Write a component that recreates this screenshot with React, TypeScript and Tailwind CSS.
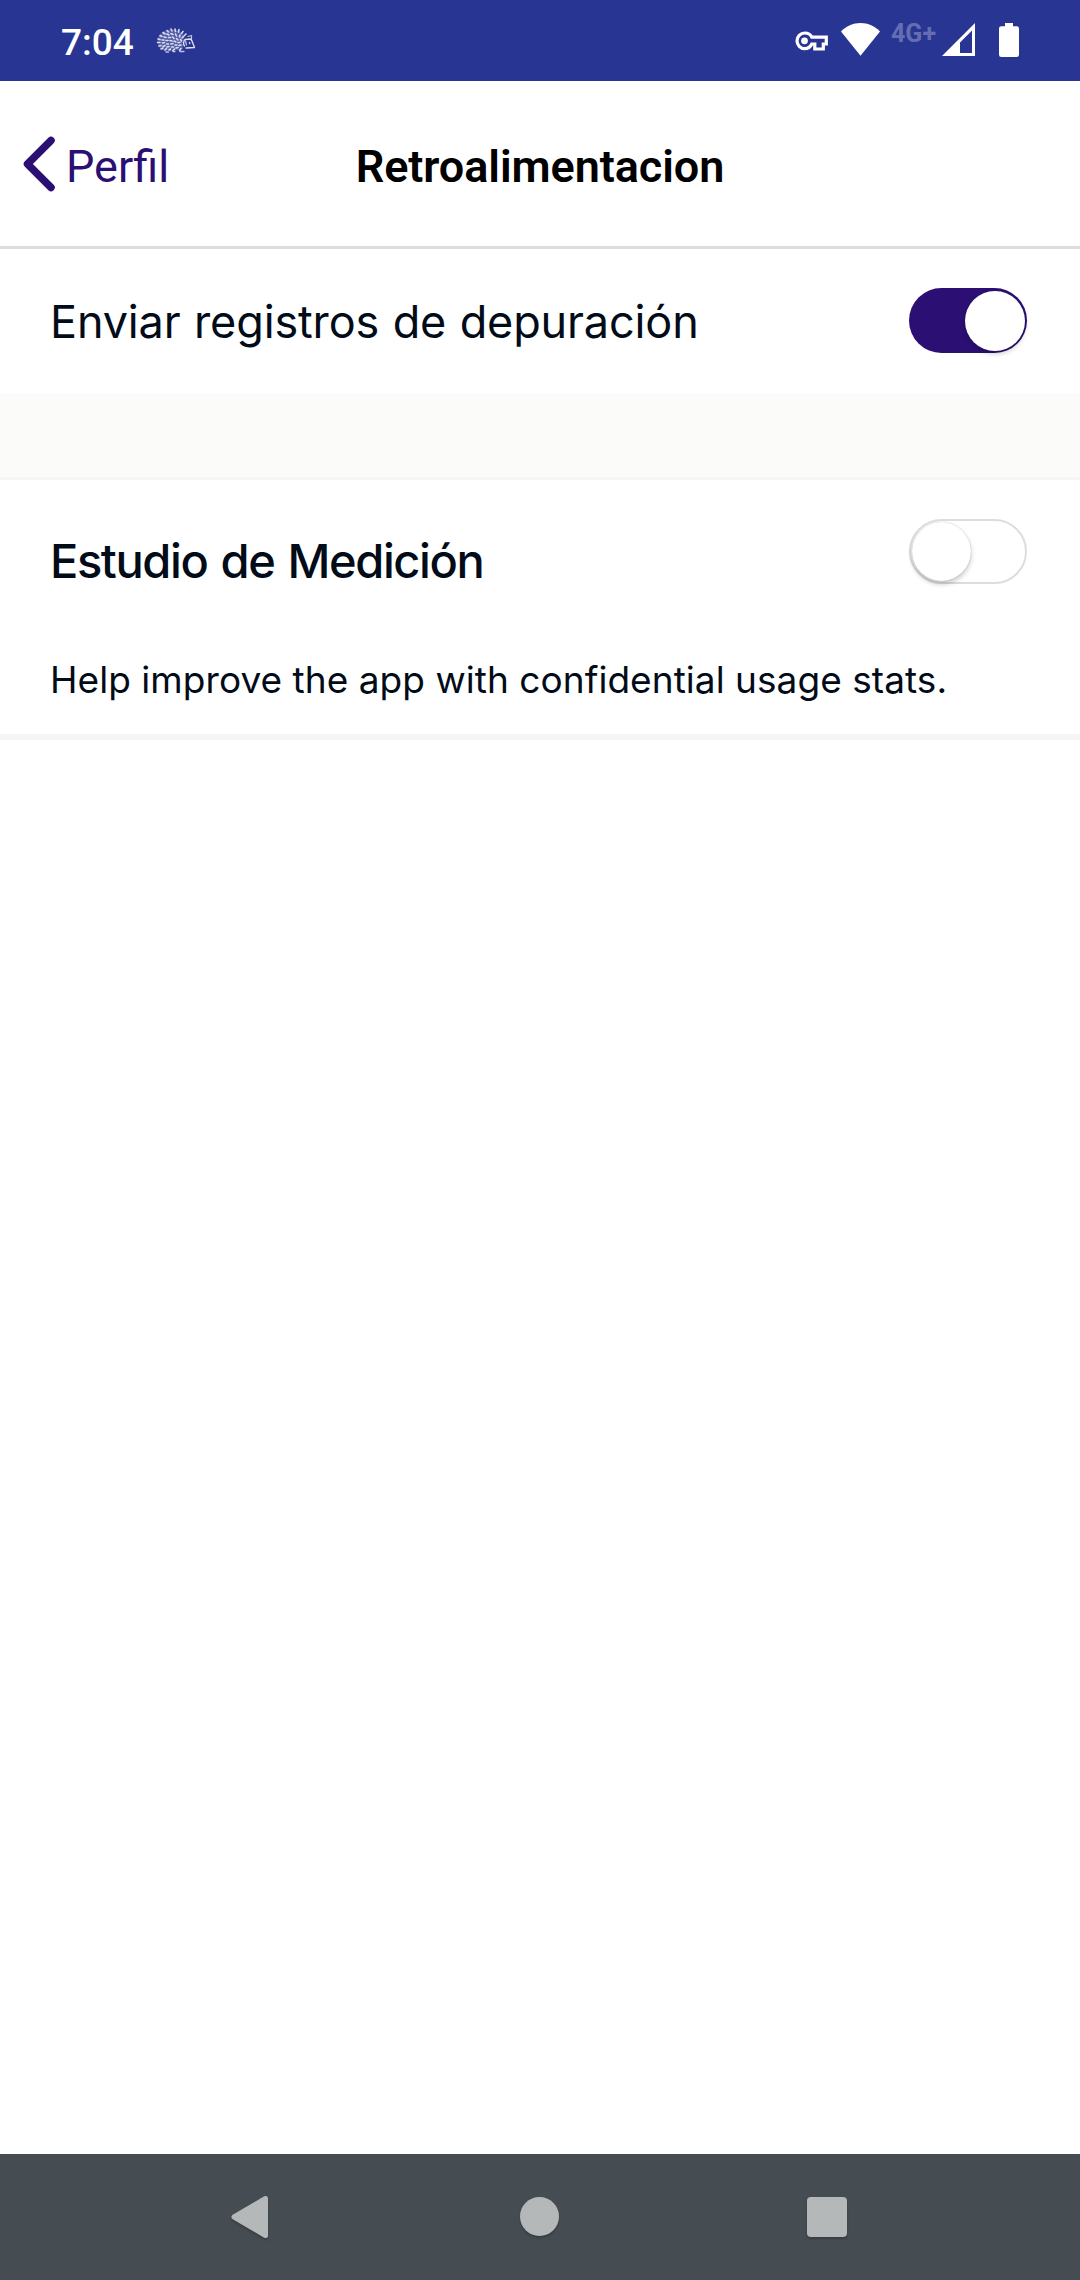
import React from "react";

const QUILLS = [
  "M11 2.500L12.500 4M15 1L16 3M19 1L19.500 3.500M23 1.500L22.500 4M27 3.500L25.500 5.500M30 6L28.500 7.500",
  "M7 4.500L9 6M11 6L13 7M15 5.500L17 6.500M19.500 6L20.500 8M24 7L23.500 9M27.500 8.500L26 10",
  "M4 7.500L6 8.500M8 9L10 9.500M12.500 9.500H14.500M16.500 9L18 10.500M20.500 10.500L22 12M24.500 11.500L25.500 13",
  "M2 11L4 11.500M6 12H8M10 12.500H12M14 12.500L16 13M18 13L20 14M22 14.500H24",
  "M1.500 14.500L4 14.500M6.500 15L8.500 14.500M10.500 16H12.500M15 16L17 15.500M19 17H21M23 17.500L25 17",
  "M3 18L5 17.500M7 18.500L9 17.500M11 19L13 18.500M15.500 19H17.500M20 20L22 19.500",
  "M5 21L7 20M9 22L10.500 20.500M13 22L14.500 21M17 22.500L18.500 21M23.500 22.500L25 20.500",
];

function Hedgehog() {
  return (
    <svg width="40" height="26" viewBox="0 0 40 26" fill="none" stroke="#ffffff" strokeLinecap="round" strokeLinejoin="round">
      <path
        d="M29 8C25 3 20 1 15 1.500C8 2 2 6 1.500 12C1 18 5 22 10 23.500C15 24 22 22 27 21L27 13Z"
        fill="#ffffff"
        fillOpacity="0.200"
        stroke="none"
      />
      {QUILLS.map((d) => (
        <path key={d} d={d} strokeWidth="1.600" opacity="0.800" />
      ))}
      <path d="M10 24L12.500 24.200M17 23.500H19M24 23.500H28" strokeWidth="1.300" opacity="0.700" />
      <path d="M28.500 18C27 16 27.500 13 29 11.500L34.500 11L36 13L38.500 19.500L30 20" strokeWidth="1.300" opacity="0.850" />
      <path d="M32 8.500L35.500 7.500L35.500 11M29.500 13L30.500 17" strokeWidth="1.200" opacity="0.700" />
      <circle cx="33.500" cy="15" r="0.600" fill="#fff" strokeWidth="0.500" />
    </svg>
  );
}

function StatusBar() {
  return (
    <div className="flex h-[81px] items-start bg-[#283593] pl-[61px] text-white">
      <span className="mt-[20px] w-[95px] text-[37px] leading-[46px] font-medium">7:04</span>
      <div className="mt-[28px]">
        <Hedgehog />
      </div>
      <svg className="mt-[31px] ml-[599px]" width="34" height="20" viewBox="0 0 34 20">
        <path
          d="M9.700 2C5.300 2 2 5.600 2 9.800S5.300 17.600 9.700 17.600C13 17.600 15.600 15.600 16.800 13H19.800V18H28.300V13H31.300V6.200H16.800C15.600 3.700 13 2 9.700 2Z"
          fill="none"
          stroke="#fff"
          strokeWidth="3.200"
        />
        <circle cx="9.500" cy="9.800" r="3.400" fill="#fff" />
      </svg>
      <svg className="mt-[23px] ml-[12px]" width="39" height="33" viewBox="0 0 39 33">
        <path d="M19.500 32.700L0 8.500C5 3.200 12 0 19.500 0S34 3.200 39 8.500Z" fill="#fff" />
      </svg>
      <span className="mt-[19px] ml-[11px] w-[51px] text-[25px] leading-[29px] font-bold text-white/30">4G+</span>
      <svg className="mt-[23px]" width="33" height="33" viewBox="0 0 33 33">
        <path d="M33 0V33H0ZM30 7.500L18 19.500V30H30Z" fill="#fff" fillRule="evenodd" />
      </svg>
      <svg className="mt-[23px] ml-[24px]" width="20" height="34" viewBox="0 0 20 34">
        <path d="M6 0H14V3.300H17.700Q20 3.300 20 5.600V31.700Q20 34 17.700 34H2.300Q0 34 0 31.700V5.600Q0 3.300 2.300 3.300H6Z" fill="#fff" />
      </svg>
    </div>
  );
}

function Header() {
  return (
    <header className="grid h-[168px] grid-cols-[1fr_auto_1fr] items-center border-b-[3px] border-[#dddddd] bg-white">
      <div className="flex items-center text-[#2b0f73]">
        <svg className="ml-[23px]" width="33" height="56" viewBox="0 0 33 56">
          <path d="M28 4.500L4.500 28L28 51.500" fill="none" stroke="currentColor" strokeWidth="7.500" strokeLinecap="round" strokeLinejoin="round" />
        </svg>
        <span className="mt-[6px] ml-[10px] text-[45px] leading-[54px]">Perfil</span>
      </div>
      <h1 className="mt-[6px] text-[45px] leading-[54px] font-semibold tracking-[-0.080px] text-black">Retroalimentacion</h1>
      <div />
    </header>
  );
}

function Toggle({ on }: { on: boolean }) {
  return (
    <div
      className={
        on
          ? "flex h-[65px] w-[118px] shrink-0 items-center justify-end rounded-full bg-[#2b0f73] pr-[2.500px]"
          : "flex h-[65px] w-[118px] shrink-0 items-center rounded-full border-2 border-[#dddddd] bg-white pl-[1px]"
      }
    >
      <div
        className={
          on
            ? "h-[60px] w-[60px] rounded-full bg-white shadow-[0_3px_5px_rgba(0,0,0,0.2)]"
            : "h-[59px] w-[59px] rounded-full bg-white shadow-[0_3px_5px_rgba(0,0,0,0.22),0_0_1px_rgba(0,0,0,0.3)]"
        }
      />
    </div>
  );
}

function NavBar() {
  return (
    <nav className="h-[126px] bg-[#454d53]">
      <svg width="1080" height="126" viewBox="0 0 1080 126" className="drop-shadow-[0_2px_1px_rgba(0,0,0,0.2)]">
        <path d="M234 63L265.500 44.500V81.500Z" fill="#b4b8b9" stroke="#b4b8b9" strokeWidth="5" strokeLinejoin="round" />
        <circle cx="539.500" cy="62.500" r="19.500" fill="#b4b8b9" />
        <rect x="807" y="43" width="40" height="40" rx="4" fill="#b4b8b9" />
      </svg>
    </nav>
  );
}

export default function App() {
  return (
    <div className="flex h-[2280px] w-[1080px] flex-col bg-white font-['Roboto',sans-serif]">
      <StatusBar />
      <Header />
      <main className="flex-1 font-['Inter',sans-serif] text-[#020b18]">
        <section className="flex h-[144px] items-start justify-between pr-[53px] pl-[50px]">
          <span className="mt-[46px] text-[45px] leading-[54px] font-normal tracking-[-0.140px] [word-spacing:1px]">
            Enviar registros de depuración
          </span>
          <div className="mt-[39px]">
            <Toggle on />
          </div>
        </section>
        <div className="h-[87px] border-b-[3px] border-[#f5f5f5] bg-[#fbfbf9]" />
        <section className="h-[260px] border-b-[6px] border-[#f5f5f5] pr-[53px] pl-[50px]">
          <div className="flex items-start justify-between">
            <h2 className="mt-[54px] text-[47px] leading-[54px] font-medium tracking-[-1.400px] [word-spacing:2px]">Estudio de Medición</h2>
            <div className="mt-[39px]">
              <Toggle on={false} />
            </div>
          </div>
          <p className="mt-[70px] text-[37px] leading-[44px] font-normal tracking-[0.050px] whitespace-nowrap">
            Help improve the app with confidential usage stats.
          </p>
        </section>
      </main>
      <NavBar />
    </div>
  );
}
